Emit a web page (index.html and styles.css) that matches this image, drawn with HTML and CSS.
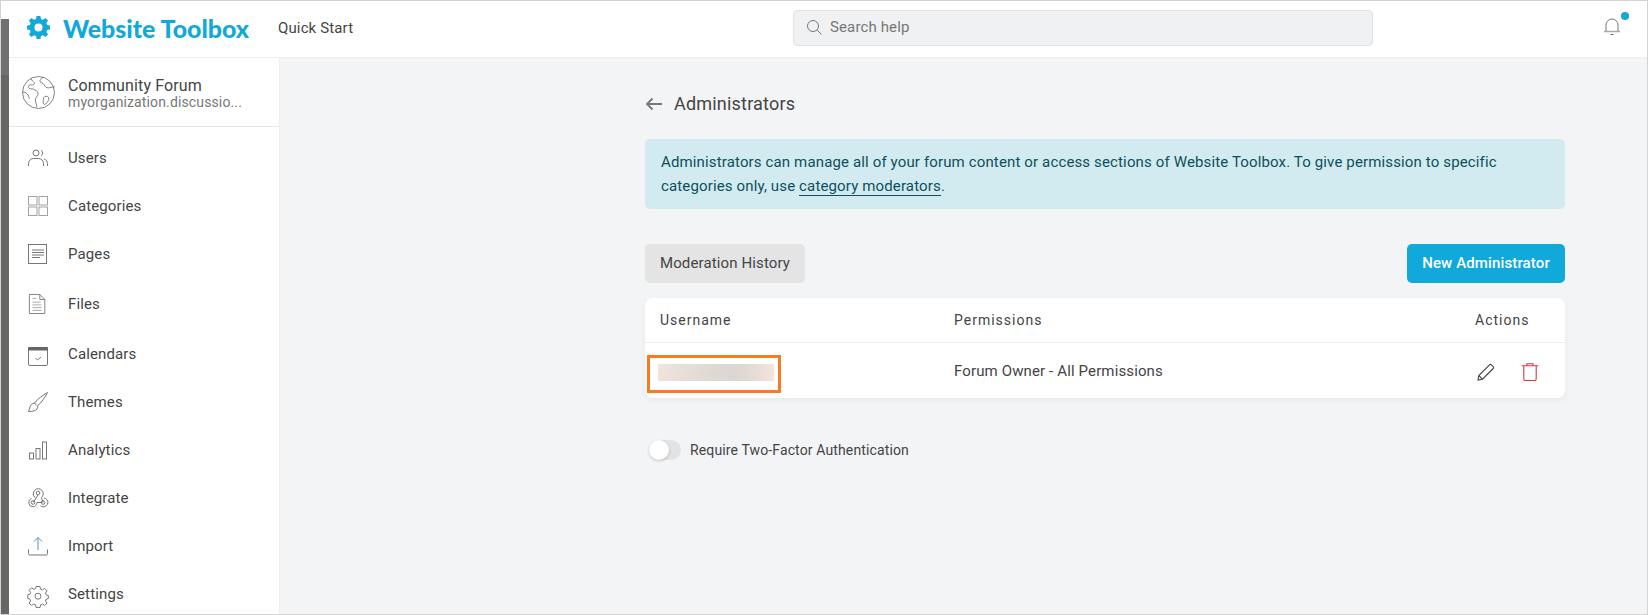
FILE: index.html
```html
<!DOCTYPE html>
<html lang="en">
<head>
<meta charset="utf-8">
<title>Administrators</title>
<link rel="stylesheet" href="styles.css">
</head>
<body>
<div class="frame">
  <div class="edge"></div>
  <div class="app">
    <header class="topbar">
      <div class="brand">
        <svg class="brand-gear" viewBox="0 0 24 24"><path fill="#11a8da" fill-rule="evenodd" d="M10 0h4l.6 3.100 2 .8 2.700-1.800 2.700 2.700-1.800 2.600.8 2 3 .6v4l-3 .6-.8 2 1.800 2.600-2.700 2.700-2.700-1.800-2 .8-.6 3.100h-4l-.6-3.100-2-.8-2.700 1.800L2 19.300l1.800-2.600-.8-2-3-.6v-4l3-.6.8-2L2 4.800l2.700-2.700 2.700 1.800 2-.8zM12 7.800a4.200 4.200 0 1 0 0 8.400 4.200 4.200 0 0 0 0-8.400z"/></svg>
        <span class="brand-name">Website Toolbox</span>
      </div>
      <span class="quick">Quick Start</span>
      <div class="search">
        <svg class="search-icon" viewBox="0 0 16 16" fill="none" stroke="#77787a" stroke-width="1"><circle cx="7" cy="7" r="5.500"/><path d="M11 11l4.500 4.500"/></svg>
        <span>Search help</span>
      </div>
      <div class="bell">
        <svg viewBox="0 0 20 20" fill="none" stroke="#77787a" stroke-width="1"><path d="M4 15V9a6 6 0 0 1 12 0v6"/><path d="M2 15.500h16" stroke="#a9a9a9" stroke-width="1.500"/><path d="M8.500 18.500h3" stroke="#666"/></svg>
        <i class="bell-dot"></i>
      </div>
    </header>
    <div class="body">
      <aside class="sidebar">
        <div class="site">
          <svg class="globe" viewBox="0 0 32 32" fill="none" stroke="#666" stroke-width=".8"><circle cx="16" cy="16" r="15.500"/><path d="M9 2.500c0 2 2 2.500 3 4 1 1.500-2 2.500-3.500 2-2 0-3 2-1.500 3.500 2 1 4 0 5.500 1.500 2 1 3.500 2 3 4.500-.5 2-2.500 3-2.500 5 0 2 1 4.500 1.500 7M20 1c-1 2-3 2.500-2.500 4.500 1 1.500 3 1 4 3s2 3 4 3 3-1 6-1M.6 16c2-1 3 0 4.500 1.500 1.500 1 1.500 3 2 4.500M22 20c2-1 4 0 4 2s-2 4-3.500 5.500c-1 .5-2-1-2-2.500s0-4 1.500-5z"/></svg>
          <div class="site-text">
            <div class="site-name">Community Forum</div>
            <div class="site-url">myorganization.discussio...</div>
          </div>
        </div>
        <nav class="nav">
          <a class="nav-item"><svg viewBox="0 0 20 20"><circle cx="8" cy="5" r="3"/><path d="M.5 18v-2.500a5 5 0 0 1 5-5h5a5 5 0 0 1 5 5V18M13 2.300a3 3 0 0 1 0 5.400M16 10.800a5 5 0 0 1 3.500 4.700V18"/></svg><span>Users</span></a>
          <a class="nav-item"><svg class="pale" viewBox="0 0 20 20"><rect x=".5" y=".5" width="8.500" height="8.500"/><rect x="11" y=".5" width="8.500" height="8.500"/><rect x=".5" y="11" width="8.500" height="8.500"/><rect x="11" y="11" width="8.500" height="8.500"/></svg><span>Categories</span></a>
          <a class="nav-item"><svg viewBox="0 0 20 20"><rect x=".5" y=".5" width="18" height="19"/><path d="M4 6h12M4 8.500h12M4 11h12M4 13.500h8"/></svg><span>Pages</span></a>
          <a class="nav-item nav-gap"><svg viewBox="0 0 20 22"><path d="M.5.500H12L17.500 6v15.500H.5zM12 .5V6h5.500"/><path class="soft" d="M4 5h4M4 9h9M4 12h10M4 15h10M4 18h10"/></svg><span>Files</span></a>
          <a class="nav-item nav-gap"><svg class="low" viewBox="0 0 20 20"><rect x=".5" y="1.500" width="19" height="18" rx="1.500"/><path class="solid" d="M.5 1.500h19v2.500H.5z"/><path d="M7.500 12l2 2 3.500-3"/></svg><span>Calendars</span></a>
          <a class="nav-item"><svg viewBox="0 0 20 20"><path d="M19.500.5C15 3 9 7.500 6.500 11c-2.500.5-4 2-4.500 4-.3 1.500-1 3-1.500 4.500 4 0 7-.5 8.500-2.500 1-1.500 1-3 .8-3.500C13 11 17.500 5 19.500.5zM6.500 11l2.300 2.500"/></svg><span>Themes</span></a>
          <a class="nav-item"><svg viewBox="0 0 20 20"><rect x="1.500" y="13" width="4" height="6"/><rect x="8" y="8.500" width="4" height="10.500"/><rect x="14.500" y="2" width="4" height="17"/></svg><span>Analytics</span></a>
          <a class="nav-item"><svg viewBox="0 0 20 20"><circle cx="10" cy="5" r="1.800"/><circle cx="5" cy="14.500" r="1.800"/><circle cx="15" cy="14.500" r="1.800"/><path d="M7 9.500a5 5 0 1 1 6.500 0l1.500 5M10 7l-4.800 7.500M3.500 10.500A4.300 4.300 0 0 0 5 18.800c2.500 0 3.500-2 4-4.300h5M16 10a4.400 4.400 0 0 1-1 8.800c-1 0-2-.5-2.500-1"/></svg><span>Integrate</span></a>
          <a class="nav-item"><svg viewBox="0 0 20 20"><path class="arrow" d="M10 14V1.500M6 5.500l4-4 4 4"/><path d="M.5 13.500v4a1.500 1.500 0 0 0 1.500 1.500h16a1.500 1.500 0 0 0 1.500-1.500v-4"/></svg><span>Import</span></a>
          <a class="nav-item"><svg class="low" viewBox="0 0 20 20"><path d="M8 .5h4l.5 2.600 1.900.8 2.200-1.500 2.400 2.500-1.500 2.100.7 1.900 2.100.5v3.200l-2.100.5-.7 1.900 1.500 2-2.500 2.500-2-1.500-1.900.8-.5 2.600H8l-.5-2.600-1.900-.8-2 1.500-2.500-2.500 1.500-2-.7-1.900-2.100-.5V8.800l2.100-.5.700-1.900-1.500-2.100 2.400-2.500 2.200 1.500 1.900-.8z"/><circle cx="10" cy="10.200" r="3"/></svg><span>Settings</span></a>
        </nav>
      </aside>
      <main class="main">
        <div class="page">
          <div class="title-row">
            <svg class="back" viewBox="0 0 18 14" fill="none" stroke="#777" stroke-width="1.800"><path d="M17 7H2M7.500 1.500L2 7l5.500 5.500"/></svg>
            <h1>Administrators</h1>
          </div>
          <div class="alert">Administrators can manage all of your forum content or access sections of Website Toolbox. To give permission to specific categories only, use <a class="alert-link">category moderators</a>.</div>
          <div class="actions">
            <button class="btn btn-grey">Moderation History</button>
            <button class="btn btn-blue">New Administrator</button>
          </div>
          <div class="card">
            <div class="row row-head">
              <span class="col-user">Username</span>
              <span class="col-perm">Permissions</span>
              <span class="col-act">Actions</span>
            </div>
            <div class="row row-body">
              <span class="col-user"><span class="blur-name"></span><span class="mark"></span></span>
              <span class="col-perm">Forum Owner - All Permissions</span>
              <span class="col-act icons">
                <svg class="ic" viewBox="0 0 18 18" fill="none" stroke="#444" stroke-width="1.100"><path d="M1 17l.8-4.500L12.500 1.800a1.300 1.300 0 0 1 1.800 0l1.900 1.900a1.300 1.300 0 0 1 0 1.800L5.500 16.200zM1.800 12.500l3.700 3.700"/></svg>
                <svg class="ic" viewBox="0 0 18 18" fill="none" stroke="#d9383f" stroke-width="1.100"><path d="M.7 2.800h16.600M2.800 3v13a1.500 1.500 0 0 0 1.500 1.500h9.400a1.500 1.500 0 0 0 1.500-1.500V3M6 2.500V.7h6v1.800"/></svg>
              </span>
            </div>
          </div>
          <div class="toggle-row">
            <span class="toggle"><i class="knob"></i></span>
            <span>Require Two-Factor Authentication</span>
          </div>
        </div>
      </main>
    </div>
  </div>
</div>
</body>
</html>
```

FILE: styles.css
```css
* { box-sizing: border-box; }
html, body { margin: 0; padding: 0; }
body {
  font-family: Roboto, "Liberation Sans", sans-serif;
  color: #444;
  background: #fff;
  letter-spacing: .13px;
}
.frame {
  width: 1648px;
  height: 615px;
  border: 1px solid #d4d4d4;
  display: flex;
  overflow: hidden;
  background: #fff;
}
.edge {
  width: 8px;
  margin-top: 18px;
  background: linear-gradient(#717171 0, #717171 56px, #666664 56px);
  flex: none;
}
.app { flex: 1; display: flex; flex-direction: column; min-width: 0; }
.topbar {
  height: 57px;
  flex: none;
  display: flex;
  align-items: center;
  border-bottom: 1px solid #eee;
  background: #fff;
  padding-left: 18px;
  padding-bottom: 3px;
}
.brand { display: flex; align-items: center; width: 251px; }
.brand-gear { width: 23px; height: 23px; margin-right: 13px; }
.brand-name { font-family: Lato, sans-serif; font-weight: 900; font-size: 24.900px; letter-spacing: 0; color: #11a8da; white-space: nowrap; }
.quick { font-size: 15px; color: #444; width: 515px; }
.search {
  width: 580px;
  height: 36px;
  display: flex;
  align-items: center;
  gap: 8px;
  padding-left: 12px;
  padding-bottom: 1px;
  background: #f0f1f3;
  border: 1px solid #e1e2e4;
  border-radius: 4px;
  font-size: 15px;
  color: #777;
}
.search-icon { width: 16px; height: 16px; }
.bell { position: relative; width: 20px; height: 20px; margin-left: 229px; margin-top: -4px; }
.bell svg { display: block; width: 20px; height: 20px; }
.bell-dot {
  position: absolute;
  top: -4px;
  left: 19px;
  width: 8px;
  height: 8px;
  border-radius: 50%;
  background: #11a8da;
}
.body { flex: 1; display: flex; min-height: 0; }
.sidebar {
  width: 271px;
  flex: none;
  background: #fff;
  border-right: 1px solid #eee;
}
.site {
  height: 69px;
  display: flex;
  align-items: center;
  gap: 13px;
  padding-left: 13px;
  border-bottom: 1px solid #e6e6e6;
}
.globe { width: 33px; height: 33px; flex: none; }
.site-text { margin-top: 3px; }
.site-name { font-size: 16px; line-height: 17px; color: #444; }
.site-url { font-size: 14px; line-height: 17px; color: #777; }
.nav { display: flex; flex-direction: column; padding-top: 7px; }
.nav-item {
  height: 48px;
  display: flex;
  align-items: center;
  gap: 20px;
  padding-left: 19px;
  font-size: 15px;
  color: #444;
}
.nav-gap { margin-top: 2px; }
.nav-item svg {
  width: 20px;
  height: 20px;
  flex: none;
  fill: none;
  stroke: #777;
  stroke-width: 1;
  overflow: visible;
}
.nav-item svg.pale { stroke: #a3a3a3; }
.nav-item svg.low { margin-top: 3px; }
.nav-item .soft { stroke: #a5a5a5; }
.nav-item .arrow { stroke: #5b91b5; }
.nav-item .solid { fill: #666; stroke: #666; }
.main { flex: 1; background: #f3f4f6; min-width: 0; }
.page { width: 920px; margin-left: 365px; }
.title-row { display: flex; align-items: center; gap: 11px; height: 81px; padding-top: 10px; }
.back { width: 18px; height: 14px; }
h1 { margin: 0; font-size: 18px; font-weight: 400; color: #444; letter-spacing: .2px; }
.alert {
  height: 70px;
  padding: 11px 16px;
  background: #d1ebf0;
  border-radius: 5px;
  font-size: 15px;
  line-height: 24px;
  color: #0f4f5c;
  letter-spacing: .14px;
}
.alert-link { border-bottom: 1px solid #0f4f5c; color: #0f4f5c; }
.actions { display: flex; justify-content: space-between; margin-top: 35px; }
.btn {
  height: 39px;
  border: 0;
  border-radius: 5px;
  font-family: inherit;
  font-size: 15px;
  letter-spacing: .13px;
  padding: 0 0 2px;
  text-align: center;
}
.btn-grey { background: #e4e4e4; color: #444; width: 160px; }
.btn-blue { background: #11a8da; color: #fff; font-weight: 500; width: 158px; }
.card {
  margin-top: 15px;
  background: #fff;
  border-radius: 8px;
  box-shadow: 0 2px 6px rgba(0, 0, 0, .05);
}
.row { display: flex; align-items: center; padding-left: 15px; font-size: 15px; color: #444; }
.row-head { height: 45px; border-bottom: 1px solid #eceef0; letter-spacing: 1px; font-size: 14px; }
.row-body { height: 55px; }
.col-user { width: 294px; position: relative; }
.col-perm { flex: 1; }
.col-act { width: 90px; flex: none; }
.icons { display: flex; gap: 26px; padding-left: 2px; margin-top: 3px; }
.ic { width: 18px; height: 18px; }
.blur-name {
  display: block;
  width: 116px;
  height: 17px;
  margin: 4px 0 0 -2px;
  background: linear-gradient(90deg, #f0e4dc, #ddd8d3 50%, #dcd7d2 70%, #f4e4da);
}
.mark {
  position: absolute;
  left: -13px;
  top: -5px;
  width: 134px;
  height: 38px;
  border: 3px solid #fb7a1e;
}
.toggle-row { display: flex; align-items: center; gap: 9px; margin: 42px 0 0 4px; font-size: 14px; color: #444; }
.toggle { position: relative; display: block; width: 32px; height: 20px; border-radius: 10px; background: #e2e3e5; }
.knob {
  position: absolute;
  left: 0;
  top: 0;
  width: 20px;
  height: 20px;
  border-radius: 50%;
  background: #fff;
  box-shadow: 0 1px 3px rgba(0, 0, 0, .2);
}
```
